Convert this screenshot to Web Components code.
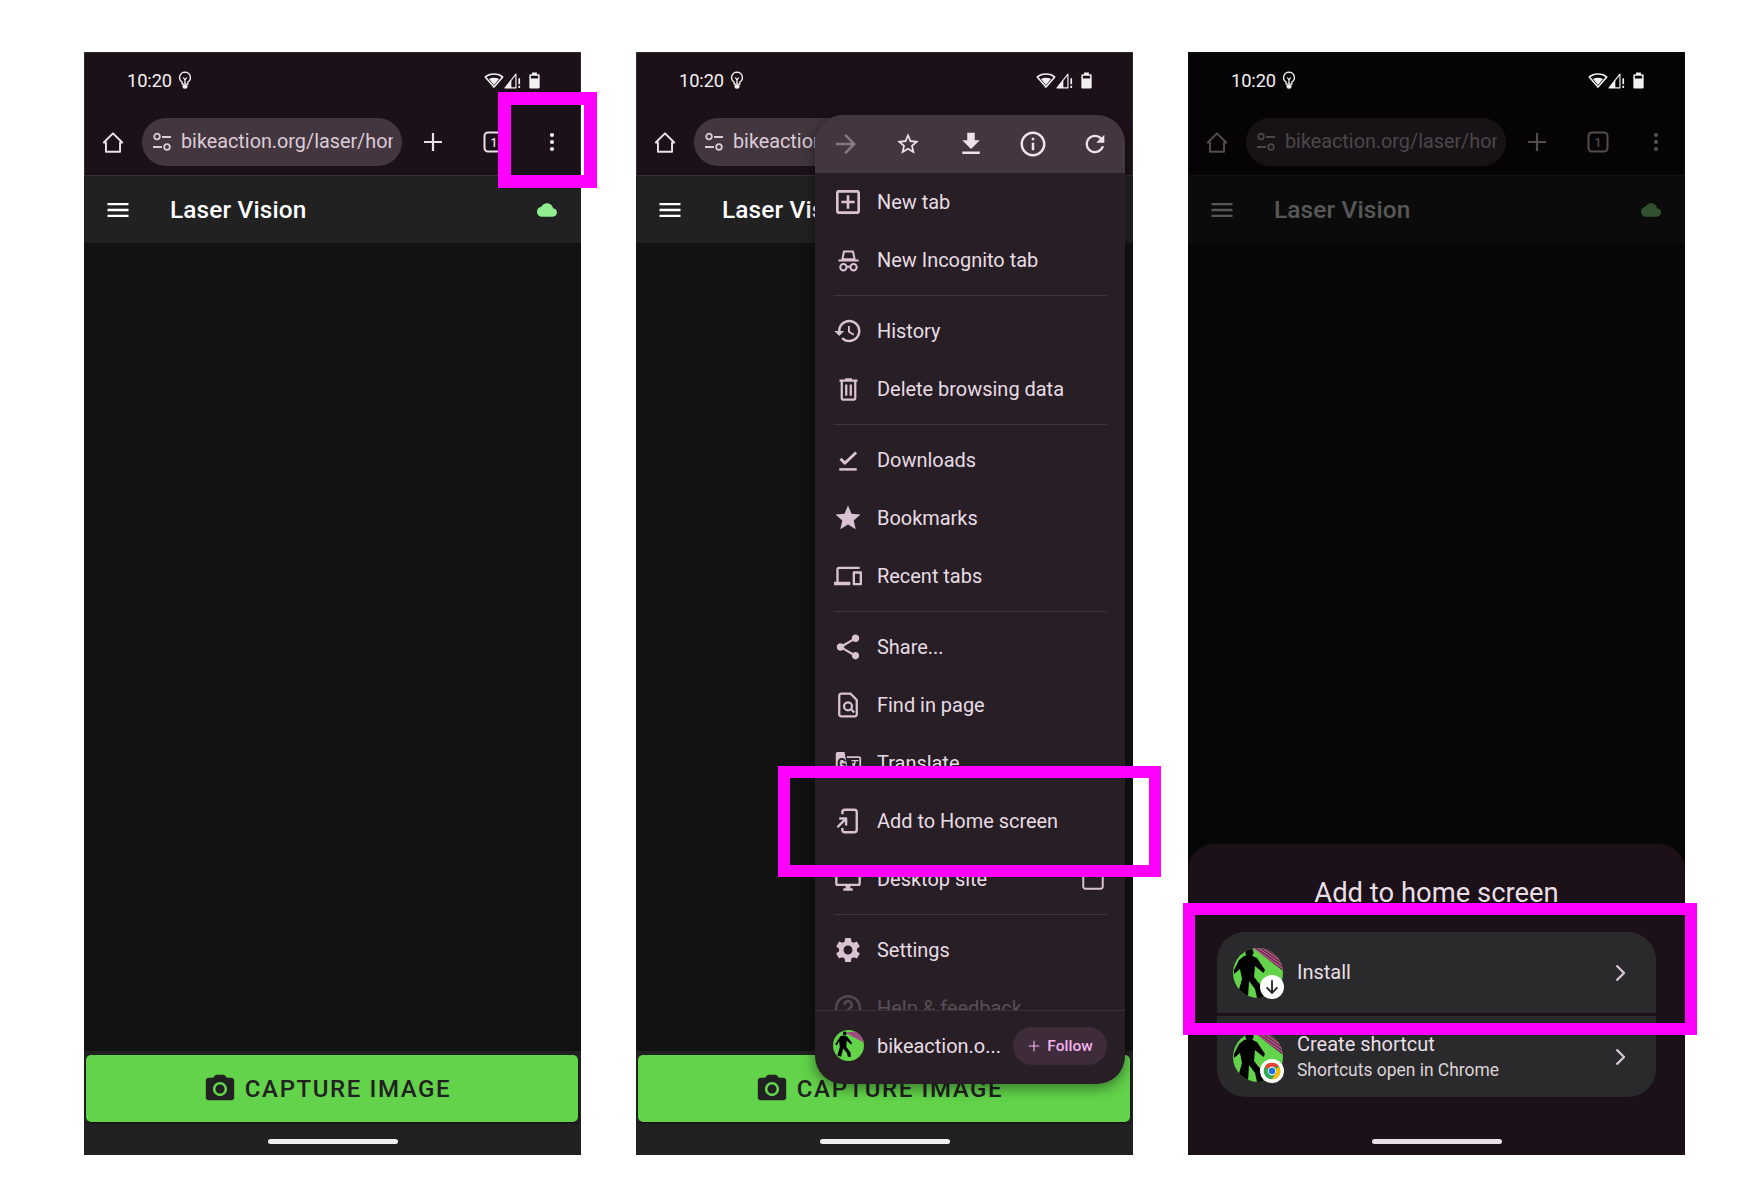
<!DOCTYPE html>
<html>
<head>
<meta charset="utf-8">
<title>Add to home screen</title>
<style>
    html, body { margin: 0; background: #fff; }
    body { font-family: Roboto, "Liberation Sans", sans-serif; }
    .row { display: flex; gap: 55px; padding: 52px 0 0 84px; }
</style>
</head>
<body>
<div class="row">
    <browser-phone>
        <callout-box slot="callout" x="414" y="40" w="99" h="96" stroke="13"></callout-box>
    </browser-phone>
    <browser-phone>
        <chrome-menu></chrome-menu>
        <callout-box slot="callout" x="142" y="714" w="383" h="111" stroke="12"></callout-box>
    </browser-phone>
    <browser-phone dimmed>
        <install-sheet></install-sheet>
        <callout-box slot="callout" x="-5" y="851" w="514" h="132" stroke="12"></callout-box>
    </browser-phone>
</div>

<script>
const line = (d, w = 2) => `<path d="${d}" fill="none" stroke="currentColor" stroke-width="${w}" stroke-linejoin="round"/>`;
const ICONS = {
    bulb: line('M12 2.500a6.500 6.500 0 0 0-3.400 12V17h6.800v-2.500A6.500 6.500 0 0 0 12 2.500zM10 9l2 3 2-3M12 12v5', 1.600) + '<path d="M9 18h6v1.500a3 3 0 0 1-6 0z"/>',
    wifi: line('M12 20.500 1.500 8.500C7 3.500 17 3.500 22.500 8.500z', 1.900) + '<path d="M6 10.800C9.500 8.800 14.500 8.800 18 10.800L12 18z"/>',
    signal: line('M2.500 21.500 15.500 5v16.500z', 1.400) + '<path d="M2.500 21.500 10 12V21.500z"/><path d="M18.500 10h2v7h-2zM18.500 19h2v2.500h-2z"/>',
    battery: '<path d="M9 2h6v2h2a1.500 1.500 0 0 1 1.500 1.500v15A1.500 1.500 0 0 1 17 22H7a1.500 1.500 0 0 1-1.500-1.500v-15A1.500 1.500 0 0 1 7 4h2zM7.500 6v3.500h9V6z" fill-rule="evenodd"/>',
    home: line('M3.500 12.500 12 4l8.500 8.500H18.500V21h-13v-8.500z', 1.800),
    tune: line('M12 7h9M3 17h9', 2) + '<circle cx="7" cy="6.500" r="2.800" fill="none" stroke="currentColor" stroke-width="1.800"/><circle cx="17" cy="17" r="2.800" fill="none" stroke="currentColor" stroke-width="1.800"/>',
    plus: line('M12 3v18M3 12h18', 2.200),
    dots: '<circle cx="12" cy="5" r="2.100"/><circle cx="12" cy="12" r="2.100"/><circle cx="12" cy="19" r="2.100"/>',
    tabs: '<rect x="2.500" y="2.500" width="19" height="19" rx="3.500" fill="none" stroke="currentColor" stroke-width="2"/><text x="12" y="16.500" text-anchor="middle" font-size="12" font-weight="500" font-family="Roboto">1</text>',
    menu: '<path d="M3 18h18v-2H3v2zm0-5h18v-2H3v2zm0-7v2h18V6H3z"/>',
    cloud: '<path d="M19.350 10.040C18.670 6.590 15.640 4 12 4 9.110 4 6.600 5.640 5.350 8.040 2.340 8.360 0 10.910 0 14c0 3.310 2.690 6 6 6h13c2.760 0 5-2.240 5-5 0-2.640-2.050-4.780-4.650-4.960z"/>',
    camera: '<circle cx="12" cy="12" r="3.200"/><path d="M9 2 7.170 4H4c-1.100 0-2 .9-2 2v12c0 1.100.9 2 2 2h16c1.100 0 2-.9 2-2V6c0-1.100-.9-2-2-2h-3.170L15 2H9zm3 15c-2.760 0-5-2.240-5-5s2.240-5 5-5 5 2.240 5 5-2.240 5-5 5z" fill-rule="evenodd"/>',
    forward: '<path d="m12 4-1.410 1.410L16.170 11H4v2h12.170l-5.580 5.590L12 20l8-8z"/>',
    starOutline: '<path d="m22 9.240-7.190-.62L12 2 9.190 8.630 2 9.240l5.460 4.730L5.820 21 12 17.270 18.180 21l-1.630-7.030L22 9.240zM12 15.400l-3.760 2.270 1-4.280-3.320-2.880 4.380-.38L12 6.100l1.710 4.040 4.380.38-3.320 2.880 1 4.280L12 15.400z"/>',
    download: '<path d="M19 9h-4V3H9v6H5l7 7 7-7zM5 18v2h14v-2H5z"/>',
    info: '<path d="M11 7h2v2h-2zm0 4h2v6h-2zm1-9C6.480 2 2 6.480 2 12s4.480 10 10 10 10-4.480 10-10S17.520 2 12 2zm0 18c-4.410 0-8-3.590-8-8s3.590-8 8-8 8 3.590 8 8-3.590 8-8 8z"/>',
    refresh: '<path d="M17.650 6.350C16.200 4.900 14.210 4 12 4c-4.420 0-7.990 3.580-7.990 8s3.570 8 7.990 8c3.730 0 6.840-2.550 7.730-6h-2.080c-.82 2.330-3.040 4-5.650 4-3.310 0-6-2.690-6-6s2.690-6 6-6c1.660 0 3.140.69 4.220 1.780L13 11h7V4l-2.350 2.350z"/>',
    newTab: '<path d="M19 3H5c-1.110 0-2 .9-2 2v14c0 1.100.89 2 2 2h14c1.100 0 2-.9 2-2V5c0-1.100-.9-2-2-2zm0 16H5V5h14v14zm-8-2h2v-4h4v-2h-4V7h-2v4H7v2h4z"/>',
    incognito: line('M8 4h8l1.500 7h-11zM3 12h18', 1.800) + '<circle cx="7.500" cy="18" r="2.800" fill="none" stroke="currentColor" stroke-width="1.800"/><circle cx="16.500" cy="18" r="2.800" fill="none" stroke="currentColor" stroke-width="1.800"/>' + line('M10.300 17.500h3.400', 1.800),
    history: '<path d="M13 3c-4.970 0-9 4.030-9 9H1l3.890 3.890.07.14L9 12H6c0-3.870 3.130-7 7-7s7 3.130 7 7-3.130 7-7 7c-1.930 0-3.680-.79-4.940-2.060l-1.420 1.420C8.270 19.990 10.510 21 13 21c4.970 0 9-4.030 9-9s-4.030-9-9-9zm-1 5v5l4.280 2.540.72-1.210-3.500-2.080V8H12z"/>',
    trash: '<path d="M15 3V2H9v1H4v2h1v15c0 1.100.9 2 2 2h10c1.100 0 2-.9 2-2V5h1V3h-5zm2 17H7V5h10v15zM9 7.500h2v10H9zm4 0h2v10h-2z"/>',
    doneLine: '<path d="M5 18.500h14v2H5z"/>' + line('M6 11l3.500 3.500L18.500 6', 2.300),
    star: '<path d="M12 17.270 18.180 21l-1.640-7.030L22 9.240l-7.190-.61L12 2 9.190 8.630 2 9.240l5.460 4.730L5.820 21z"/>',
    devices: '<path d="M4 6h18V4H4c-1.100 0-2 .9-2 2v11H0v3h14v-3H4V6zm19 2h-6c-.55 0-1 .45-1 1v10c0 .55.45 1 1 1h6c.55 0 1-.45 1-1V9c0-.55-.45-1-1-1zm-1 10h-4V10h4v8z"/>',
    share: '<path d="M18 16.080c-.76 0-1.440.3-1.960.77L8.910 12.700c.05-.23.09-.46.09-.7s-.04-.47-.09-.7l7.050-4.110c.54.5 1.250.81 2.040.81 1.660 0 3-1.340 3-3s-1.340-3-3-3-3 1.340-3 3c0 .24.04.47.09.7L8.040 9.810C7.500 9.310 6.790 9 6 9c-1.660 0-3 1.340-3 3s1.340 3 3 3c.79 0 1.500-.31 2.040-.81l7.120 4.160c-.05.21-.08.43-.08.65 0 1.610 1.310 2.920 2.920 2.920s2.920-1.310 2.920-2.920-1.310-2.920-2.920-2.920z"/>',
    findPage: line('M14 2.900H6.500A1.500 1.500 0 0 0 5 4.400v15.200a1.500 1.500 0 0 0 1.500 1.500h11a1.500 1.500 0 0 0 1.500-1.500V8zM14.700 15.700 17 18', 1.800) + '<circle cx="12" cy="13" r="3.200" fill="none" stroke="currentColor" stroke-width="1.800"/>',
    translate: '<path d="M11 7h10.500a1 1 0 0 1 1 1v12a1 1 0 0 1-1 1H11" fill="none" stroke="currentColor" stroke-width="1.500"/><path d="M1.500 4a1.500 1.500 0 0 1 1.500-1.500h6L12.500 21H3a1.500 1.500 0 0 1-1.500-1.500z"/><text x="6.700" y="17" text-anchor="middle" font-size="12" font-weight="700" font-family="Roboto" fill="#271e26">G</text>' + line('M15 10h6M18 10c0 4-1 6-3 8M16 12c.5 2.500 2 5 5 6', 1.200),
    addHome: line('M7.500 6.500V5a2 2 0 0 1 2-2h7.500a2 2 0 0 1 2 2v14a2 2 0 0 1-2 2H9.500a2 2 0 0 1-2-2v-1.500M3.500 17l6.500-6.500M5 10h5.500v5.500', 1.900),
    desktop: '<path d="M21 2H3c-1.100 0-2 .9-2 2v12c0 1.100.9 2 2 2h7v2H8v2h8v-2h-2v-2h7c1.100 0 2-.9 2-2V4c0-1.100-.9-2-2-2zm0 14H3V4h18v12z"/>',
    checkbox: '<rect x="3" y="3" width="18" height="18" rx="2" fill="none" stroke="currentColor" stroke-width="1.800"/>',
    gear: '<path d="M19.140 12.940c.04-.3.060-.61.060-.94 0-.32-.02-.64-.07-.94l2.030-1.580c.18-.14.23-.41.12-.61l-1.920-3.320c-.12-.22-.37-.29-.59-.22l-2.390.96c-.5-.38-1.030-.7-1.620-.94l-.36-2.540c-.04-.24-.24-.41-.48-.41h-3.840c-.24 0-.43.17-.47.41l-.36 2.540c-.59.24-1.130.57-1.620.94l-2.390-.96c-.22-.08-.47 0-.59.22L2.740 8.870c-.12.21-.08.47.12.61l2.030 1.580c-.05.3-.09.63-.09.94s.02.64.07.94l-2.030 1.580c-.18.14-.23.41-.12.61l1.920 3.320c.12.22.37.29.59.22l2.390-.96c.5.38 1.030.7 1.620.94l.36 2.540c.05.24.24.41.48.41h3.840c.24 0 .44-.17.47-.41l.36-2.540c.59-.24 1.130-.56 1.620-.94l2.390.96c.22.08.47 0 .59-.22l1.920-3.320c.12-.22.07-.47-.12-.61l-2.010-1.580zM12 15.600c-1.980 0-3.600-1.620-3.600-3.600s1.620-3.600 3.600-3.600 3.600 1.620 3.600 3.600-1.620 3.600-3.600 3.600z"/>',
    help: '<circle cx="12" cy="12" r="9.500" fill="none" stroke="currentColor" stroke-width="2"/>' + line('M9 9.500a3 3 0 1 1 4.500 2.600c-1 .6-1.500 1.200-1.500 2.400', 2),
    chevron: line('M8.500 4.500 16 12l-7.500 7.500', 2.400),
    follow: line('M12 3v18M3 12h18', 2)
};

class UiIcon extends HTMLElement {
    constructor() {
        super();
        this.attachShadow({ mode: 'open' });
    }
    connectedCallback() {
        const size = this.getAttribute('size') || 24;
        this.shadowRoot.innerHTML = `
            <style>
                :host { display: inline-flex; flex: none; width: ${size}px; height: ${size}px; }
                svg { width: 100%; height: 100%; fill: currentColor; overflow: visible; }
            </style>
            <svg viewBox="0 0 24 24">${ICONS[this.getAttribute('name')]}</svg>
        `;
    }
}
customElements.define('ui-icon', UiIcon);

// walker logo: large hatched version on the sheet, small one in the menu footer
class SiteLogo extends HTMLElement {
    constructor() {
        super();
        this.attachShadow({ mode: 'open' });
    }
    connectedCallback() {
        const size = this.getAttribute('size') || 50;
        const badge = this.getAttribute('badge');
        let badgeMark = '';
        if (badge === 'download') {
            badgeMark = `<span class="badge"><svg viewBox="0 0 24 24"><path d="M12 4v15M5.500 12.500 12 19l6.500-6.500" fill="none" stroke="#222" stroke-width="2.200"/></svg></span>`;
        } else if (badge === 'chrome') {
            badgeMark = `<span class="badge"><svg viewBox="0 0 24 24">
                <circle cx="12" cy="12" r="10" fill="#34a853"/>
                <path d="M12 2a10 10 0 0 1 8.660 5H12a5 5 0 0 0-4.330 2.500L3.340 7A10 10 0 0 1 12 2z" fill="#ea4335"/>
                <path d="M20.660 7A10 10 0 0 1 12 22l4.330-7.500A5 5 0 0 0 16.330 9.500z" fill="#fbbc04"/>
                <circle cx="12" cy="12" r="5" fill="#fff"/><circle cx="12" cy="12" r="3.900" fill="#1a73e8"/>
            </svg></span>`;
        }
        const art = this.hasAttribute('hatch') ? `
                <defs>
                    <pattern id="h" width="5" height="5" patternUnits="userSpaceOnUse" patternTransform="rotate(35)">
                        <rect width="5" height="5" fill="#3a2a35"/><rect width="5" height="2.500" fill="#e0579f"/>
                    </pattern>
                </defs>
                <rect width="100" height="100" fill="#62d34a"/>
                <path d="M40 0H100V46z" fill="url(#h)"/>
                <circle cx="33" cy="9" r="8"/>
                <path d="M22 16Q35 12 48 20L64 44 61 50 44 36 42 58 58 78 62 100H48L44 82 32 66 30 100 10 90 18 62 14 42 2 52V44L12 24Z"/>
            ` : `
                <rect width="100" height="100" fill="#62d34a"/>
                <path d="M41 9 75 4 100 30V41z" fill="#a04a85"/>
                <circle cx="38" cy="11" r="6"/>
                <path d="M24 20Q36 14 46 22L62 42 58 47 44 34 43 55 56 72 58 86H48L45 74 33 60 26 86 14 82 22 56 20 36 12 50 7 46Z"/>
            `;
        this.shadowRoot.innerHTML = `
            <style>
                :host { display: inline-block; flex: none; position: relative; width: ${size}px; height: ${size}px; }
                svg.logo { display: block; width: 100%; height: 100%; border-radius: 50%; }
                .badge { position: absolute; right: -1px; bottom: -1px; width: 24px; height: 24px; border-radius: 50%; background: #fff; display: flex; align-items: center; justify-content: center; }
                .badge svg { width: 20px; height: 20px; }
            </style>
            <svg class="logo" viewBox="0 0 100 100">${art}</svg>
            ${badgeMark}
        `;
    }
}
customElements.define('site-logo', SiteLogo);

class StatusBar extends HTMLElement {
    constructor() {
        super();
        this.attachShadow({ mode: 'open' });
        this.shadowRoot.innerHTML = `
            <style>
                :host { display: flex; align-items: center; height: 56px; padding: 0 37px 0 43px; color: #f4f1f3; position: relative; z-index: 3; box-sizing: border-box; }
                .time { font-size: 18.300px; letter-spacing: -.1px; margin-top: 1px; }
                .bulb { margin-left: 3px; }
                .right { margin-left: auto; display: flex; align-items: center; }
            </style>
            <span class="time">10:20</span>
            <ui-icon class="bulb" name="bulb" size="20"></ui-icon>
            <span class="right">
                <ui-icon name="wifi" size="20"></ui-icon>
                <ui-icon name="signal" size="20" style="margin-left:-1px"></ui-icon>
                <ui-icon name="battery" size="19" style="margin-left:2px"></ui-icon>
            </span>
        `;
    }
}
customElements.define('status-bar', StatusBar);

class ChromeToolbar extends HTMLElement {
    constructor() {
        super();
        this.attachShadow({ mode: 'open' });
        this.shadowRoot.innerHTML = `
            <style>
                :host { display: flex; align-items: center; height: 68px; padding: 0 0 0 16px; color: #ecdfe8; border-bottom: 1px solid #3a2f37; box-sizing: border-box; }
                .pill { width: 260px; height: 48px; margin-left: 16px; border-radius: 24px; background: #43363f; display: flex; align-items: center; padding: 0 9px 0 8px; box-sizing: border-box; flex: none; color: #dccbd7; }
                .url { font-size: 19.800px; margin-left: 7px; overflow: hidden; white-space: nowrap; }
                .plus { margin-left: 19px; }
                .tabs { margin-left: 37px; }
                .dots { margin-left: 34px; color: #f1f1f1; }
            </style>
            <ui-icon name="home" size="26"></ui-icon>
            <div class="pill">
                <ui-icon name="tune" size="24"></ui-icon>
                <span class="url">bikeaction.org/laser/home</span>
            </div>
            <ui-icon class="plus" name="plus" size="24"></ui-icon>
            <ui-icon class="tabs" name="tabs" size="24"></ui-icon>
            <ui-icon class="dots" name="dots" size="24"></ui-icon>
        `;
    }
}
customElements.define('chrome-toolbar', ChromeToolbar);

class LaserApp extends HTMLElement {
    constructor() {
        super();
        this.attachShadow({ mode: 'open' });
        this.shadowRoot.innerHTML = `
            <style>
                :host { display: flex; flex-direction: column; flex: 1; min-height: 0; background: #212121; }
                header { display: flex; align-items: center; height: 67px; padding: 0 24px 0 20px; color: #fff; flex: none; }
                h1 { margin: 0 0 0 38px; font-size: 24.400px; font-weight: 500; letter-spacing: .15px; }
                .cloud { margin-left: auto; color: #90ee90; }
                main { flex: 1; background: #121212; }
                .action { flex: none; padding: 4px 3px 0 2px; }
                button { display: flex; align-items: center; justify-content: center; gap: 8px; width: 100%; height: 67px; padding: 0 10px 0 0; border: 0; border-radius: 5px; background: #62d34a; color: #212121; font: 500 24px Roboto, sans-serif; letter-spacing: 1.600px; box-shadow: 0 1px 2px rgba(0,0,0,.5); }
                .gesture { width: 130px; height: 5px; border-radius: 3px; background: #f0f0f0; margin: 17px auto 11px; flex: none; }
            </style>
            <header>
                <ui-icon name="menu" size="28"></ui-icon>
                <h1>Laser Vision</h1>
                <ui-icon class="cloud" name="cloud" size="20"></ui-icon>
            </header>
            <main></main>
            <div class="action">
                <button><ui-icon name="camera" size="34"></ui-icon>CAPTURE IMAGE</button>
            </div>
            <div class="gesture"></div>
        `;
    }
}
customElements.define('laser-app', LaserApp);

class CalloutBox extends HTMLElement {
    constructor() {
        super();
        this.attachShadow({ mode: 'open' });
        this.shadowRoot.innerHTML = `
            <style>
                :host { display: block; position: absolute; box-sizing: border-box; border-style: solid; border-color: #ff00ff; z-index: 5; }
            </style>
        `;
    }
    connectedCallback() {
        this.style.left = this.getAttribute('x') + 'px';
        this.style.top = this.getAttribute('y') + 'px';
        this.style.width = this.getAttribute('w') + 'px';
        this.style.height = this.getAttribute('h') + 'px';
        this.style.borderWidth = this.getAttribute('stroke') + 'px';
    }
}
customElements.define('callout-box', CalloutBox);

class BrowserPhone extends HTMLElement {
    constructor() {
        super();
        this.attachShadow({ mode: 'open' });
        this.shadowRoot.innerHTML = `
            <style>
                :host { display: block; position: relative; width: 497px; height: 1103px; flex: none; }
                .screen { position: relative; width: 100%; height: 100%; overflow: hidden; background: #1c1118; display: flex; flex-direction: column; box-shadow: inset 0 0 0 1px rgba(120,120,120,.25); }
                .scrim { display: none; position: absolute; inset: 0; z-index: 2; }
                :host([dimmed]) .screen { background: #110b0f; }
                :host([dimmed]) .scrim { display: block; background: rgba(0,0,0,.66); }
            </style>
            <div class="screen">
                <status-bar></status-bar>
                <chrome-toolbar></chrome-toolbar>
                <laser-app></laser-app>
                <div class="scrim"></div>
                <slot></slot>
            </div>
            <slot name="callout"></slot>
        `;
    }
}
customElements.define('browser-phone', BrowserPhone);

class MenuItem extends HTMLElement {
    constructor() {
        super();
        this.attachShadow({ mode: 'open' });
    }
    connectedCallback() {
        const check = this.hasAttribute('checkbox') ? '<ui-icon class="check" name="checkbox" size="26"></ui-icon>' : '';
        this.shadowRoot.innerHTML = `
            <style>
                :host { display: flex; align-items: center; height: 58px; padding: 0 18px 0 19px; flex: none; color: #e8dce4; font-size: 19.950px; }
                :host([faded]) { opacity: .25; }
                .icon { width: 28px; display: flex; justify-content: center; color: #d9c3d3; margin-right: 15px; flex: none; }
                .check { margin-left: auto; margin-right: 1px; color: #d9c3d3; }
            </style>
            <span class="icon"><ui-icon name="${this.getAttribute('icon')}" size="${this.getAttribute('size') || 30}"></ui-icon></span>
            <slot></slot>
            ${check}
        `;
    }
}
customElements.define('menu-item', MenuItem);

class MenuDivider extends HTMLElement {
    constructor() {
        super();
        this.attachShadow({ mode: 'open' });
        this.shadowRoot.innerHTML = `
            <style>
                :host { display: block; height: 1px; margin: 6px 18px 6px 19px; background: #40353d; flex: none; }
            </style>
        `;
    }
}
customElements.define('menu-divider', MenuDivider);

class ChromeMenu extends HTMLElement {
    constructor() {
        super();
        this.attachShadow({ mode: 'open' });
        this.shadowRoot.innerHTML = `
            <style>
                :host { display: flex; flex-direction: column; position: absolute; left: 179px; top: 63px; width: 310px; height: 969px; border-radius: 28px; overflow: hidden; background: #271e26; z-index: 4; box-shadow: 0 4px 14px rgba(0,0,0,.45); }
                .tools { display: flex; align-items: center; justify-content: space-between; height: 58px; padding: 0 15px 0 16px; background: #43363f; color: #efe2ea; flex: none; }
                .tools span { width: 30px; display: flex; justify-content: center; }
                .tools .off { color: #857982; }
                .list { flex: 1; min-height: 0; overflow: hidden; display: flex; flex-direction: column; }
                footer { display: flex; align-items: center; height: 74px; padding: 0 18px 4px 18px; border-top: 1px solid #3b3038; box-sizing: border-box; flex: none; color: #e8dce4; font-size: 19.950px; }
                .site { margin-left: 13px; white-space: nowrap; }
                .follow { display: flex; align-items: center; justify-content: center; gap: 6px; margin-left: auto; width: 94px; height: 38px; border-radius: 19px; background: #3e2c3a; color: #f6b2ee; font-size: 15.500px; font-weight: 500; flex: none; }
            </style>
            <div class="tools">
                <span class="off"><ui-icon name="forward" size="30"></ui-icon></span>
                <span><ui-icon name="starOutline" size="26"></ui-icon></span>
                <span><ui-icon name="download" size="30"></ui-icon></span>
                <span><ui-icon name="info" size="30"></ui-icon></span>
                <span><ui-icon name="refresh" size="28"></ui-icon></span>
            </div>
            <div class="list">
                <menu-item icon="newTab" size="32">New tab</menu-item>
                <menu-item icon="incognito" size="27">New Incognito tab</menu-item>
                <menu-divider></menu-divider>
                <menu-item icon="history">History</menu-item>
                <menu-item icon="trash" size="27">Delete browsing data</menu-item>
                <menu-divider></menu-divider>
                <menu-item icon="doneLine">Downloads</menu-item>
                <menu-item icon="star" size="30">Bookmarks</menu-item>
                <menu-item icon="devices" size="28">Recent tabs</menu-item>
                <menu-divider></menu-divider>
                <menu-item icon="share">Share...</menu-item>
                <menu-item icon="findPage">Find in page</menu-item>
                <menu-item icon="translate" size="28">Translate</menu-item>
                <menu-item icon="addHome">Add to Home screen</menu-item>
                <menu-item icon="desktop" size="28" checkbox>Desktop site</menu-item>
                <menu-divider></menu-divider>
                <menu-item icon="gear">Settings</menu-item>
                <menu-item icon="help" faded>Help &amp; feedback</menu-item>
            </div>
            <footer>
                <site-logo size="31"></site-logo>
                <span class="site">bikeaction.o...</span>
                <span class="follow"><ui-icon name="follow" size="14"></ui-icon>Follow</span>
            </footer>
        `;
    }
}
customElements.define('chrome-menu', ChromeMenu);

class InstallOption extends HTMLElement {
    constructor() {
        super();
        this.attachShadow({ mode: 'open' });
    }
    connectedCallback() {
        const sub = this.getAttribute('sub');
        this.shadowRoot.innerHTML = `
            <style>
                :host { display: flex; align-items: center; height: 81px; padding: 0 24px 0 16px; background: #2a2a2c; color: #e9dfe6; }
                .text { margin-left: 14px; display: flex; flex-direction: column; gap: 4px; padding-bottom: 2px; }
                .title { font-size: 20px; }
                .sub { font-size: 17.450px; color: #dcd2d9; }
                .go { margin-left: auto; color: #d7c6d2; }
            </style>
            <site-logo size="50" hatch badge="${this.getAttribute('badge')}"></site-logo>
            <div class="text">
                <span class="title">${this.getAttribute('label')}</span>
                ${sub ? `<span class="sub">${sub}</span>` : ''}
            </div>
            <ui-icon class="go" name="chevron" size="24"></ui-icon>
        `;
    }
}
customElements.define('install-option', InstallOption);

class InstallSheet extends HTMLElement {
    constructor() {
        super();
        this.attachShadow({ mode: 'open' });
        this.shadowRoot.innerHTML = `
            <style>
                :host { display: flex; flex-direction: column; position: absolute; left: 0; right: 0; bottom: 0; height: 311px; border-radius: 26px 26px 0 0; background: #1c1118; z-index: 3; box-sizing: border-box; padding-top: 29px; }
                h2 { margin: 0; height: 40px; line-height: 40px; text-align: center; font-size: 27.400px; font-weight: 400; color: #eadfe6; }
                .card { margin: 19px 29px 0; border-radius: 28px; overflow: hidden; display: flex; flex-direction: column; gap: 3px; }
                .gesture { width: 130px; height: 5px; border-radius: 3px; background: #e8dfe5; margin: 42px auto 0; }
            </style>
            <h2>Add to home screen</h2>
            <div class="card">
                <install-option label="Install" badge="download"></install-option>
                <install-option label="Create shortcut" sub="Shortcuts open in Chrome" badge="chrome"></install-option>
            </div>
            <div class="gesture"></div>
        `;
    }
}
customElements.define('install-sheet', InstallSheet);
</script>
</body>
</html>
